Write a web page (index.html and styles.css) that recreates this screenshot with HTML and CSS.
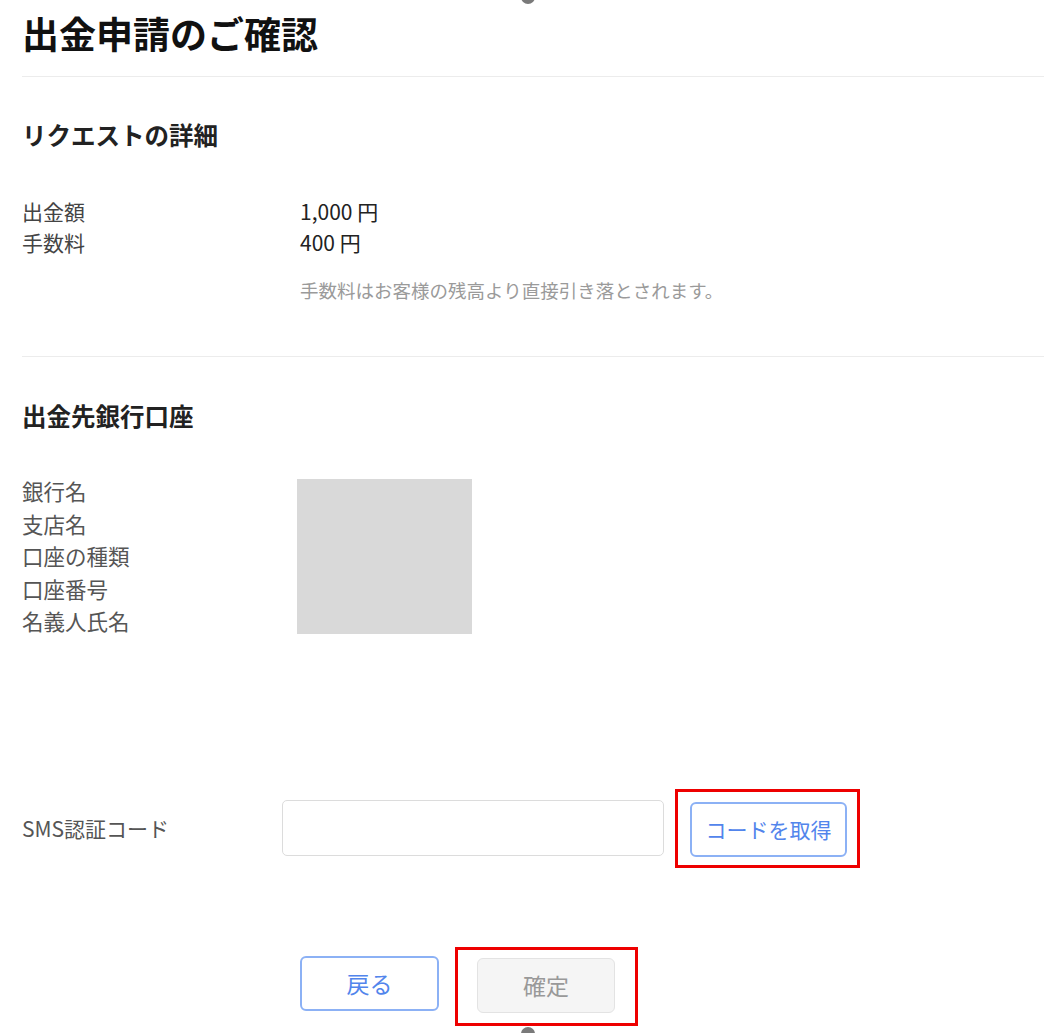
FILE: index.html
```html
<!DOCTYPE html>
<html lang="ja">
<head>
  <meta charset="UTF-8">
  <meta name="viewport" content="width=device-width, initial-scale=1.0">
  <title>出金申請のご確認</title>
  <link rel="stylesheet" href="styles.css">
</head>
<body>

  <span class="handle handle-top"></span>

  <div class="page">
    <h1 class="title">出金申請のご確認</h1>

    <section class="block block-request">
      <h2 class="block-title">リクエストの詳細</h2>
      <div class="detail">
        <div class="detail-label">出金額</div>
        <div class="detail-value">1,000 円</div>
        <div class="detail-label">手数料</div>
        <div class="detail-value">400 円</div>
      </div>
      <p class="note">手数料はお客様の残高より直接引き落とされます。</p>
    </section>

    <section class="block block-bank">
      <h2 class="block-title">出金先銀行口座</h2>
      <div class="bank">
        <ul class="bank-labels">
          <li>銀行名</li>
          <li>支店名</li>
          <li>口座の種類</li>
          <li>口座番号</li>
          <li>名義人氏名</li>
        </ul>
        <div class="bank-mask"></div>
      </div>
    </section>

    <form class="sms">
      <label for="sms-code" class="sms-label">SMS認証コード</label>
      <input type="text" id="sms-code" class="sms-input">
      <span class="mark">
        <button type="button" class="btn btn-outline btn-code">コードを取得</button>
      </span>
    </form>

    <div class="actions">
      <button type="button" class="btn btn-outline btn-back">戻る</button>
      <span class="mark mark-confirm">
        <button type="button" class="btn btn-disabled" disabled>確定</button>
      </span>
    </div>
  </div>

  <span class="handle handle-bottom"></span>

</body>
</html>
```

FILE: styles.css
```css
body {
  margin: 0;
  padding: 0;
  font-family: "Noto Sans CJK JP", "Noto Sans", sans-serif;
  color: #333;
  background-color: #fff;
  position: relative;
  height: 1033px;
  overflow: hidden;
}

.page {
  padding: 9px 0 0 22px;
}

.title {
  margin: 0;
  padding-bottom: 18px;
  font-size: 37px;
  line-height: 49px;
  font-weight: 700;
  color: #111;
  border-bottom: 1px solid #ececec;
}

.block-title {
  margin: 0;
  font-size: 24.5px;
  line-height: 32px;
  font-weight: 700;
  color: #222;
}

.block-request {
  padding-top: 42px;
  padding-bottom: 54px;
  border-bottom: 1px solid #ececec;
}

.detail {
  display: grid;
  grid-template-columns: 278px auto;
  margin-top: 45px;
  font-size: 21px;
  line-height: 31px;
}

.detail-label {
  color: #444;
}

.detail-value {
  color: #222;
}

.note {
  margin: 20px 0 0 278px;
  font-size: 18.5px;
  line-height: 24px;
  color: #9a9a9a;
}

.block-bank {
  padding-top: 43px;
}

.bank {
  display: flex;
  align-items: flex-start;
  margin-top: 43px;
}

.bank-labels {
  list-style: none;
  margin: 0;
  padding: 0;
  width: 275px;
  font-size: 21.5px;
  line-height: 32.5px;
  color: #555;
}

.bank-mask {
  margin-top: 4px;
  width: 175px;
  height: 155px;
  background-color: #d9d9d9;
}

.sms {
  display: flex;
  align-items: center;
  margin: 151px 0 0;
}

.sms-label {
  width: 260px;
  font-size: 21px;
  color: #555;
}

.sms-input {
  width: 382px;
  height: 56px;
  box-sizing: border-box;
  border: 1px solid #dcdcdc;
  border-radius: 5px;
  margin: 0;
}

.mark {
  display: inline-block;
  margin-left: 11px;
  padding: 10px 10px 8px 12px;
  border: 3px solid #ee0000;
}

.btn {
  font-family: inherit;
  font-size: 21px;
  box-sizing: border-box;
  border-radius: 6px;
  background-color: #fff;
  cursor: pointer;
}

.btn-outline {
  color: #5285ec;
  border: 2px solid #8cb1f5;
}

.btn-code {
  width: 157px;
  height: 55px;
  display: block;
}

.actions {
  display: flex;
  align-items: flex-start;
  margin: 79px 0 0 278px;
}

.btn-back {
  margin-top: 9px;
  width: 139px;
  height: 55px;
  font-size: 23px;
}

.mark-confirm {
  margin-left: 16px;
  padding: 8px 20px 10px 19px;
}

.btn-disabled {
  display: block;
  width: 138px;
  height: 55px;
  font-size: 23px;
  color: #999;
  background-color: #f5f5f5;
  border: 1px solid #e3e3e3;
  cursor: default;
}

.handle {
  position: absolute;
  left: 521px;
  width: 14px;
  height: 14px;
  border-radius: 50%;
  background-color: #7a7a7a;
}

.handle-top {
  top: -10px;
}

.handle-bottom {
  bottom: -8px;
}
```
